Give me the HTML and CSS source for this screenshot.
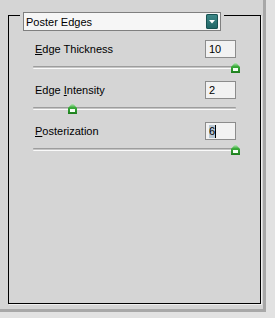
FILE: index.html
```html
<!DOCTYPE html>
<html lang="en">
<head>
    <meta charset="UTF-8">
    <title>Poster Edges</title>
    <link rel="stylesheet" href="styles.css">
</head>
<body>
    <div class="panel">
        <div class="group">

            <!-- Filter picker sits on the group box border -->
            <div class="picker-wrap">
                <div class="picker">
                    <span class="picker-text">Poster Edges</span>
                    <span class="picker-btn">
                        <svg width="6" height="4" viewBox="0 0 6 4"><polygon points="0,0 6,0 3,3.5" fill="#fff"/></svg>
                    </span>
                </div>
            </div>

            <div class="setting">
                <div class="row">
                    <span class="label"><u>E</u>dge Thickness</span>
                    <span class="field">10</span>
                </div>
                <div class="slider">
                    <div class="track"></div>
                    <span class="thumb" style="left: 100%"></span>
                </div>
            </div>

            <div class="setting">
                <div class="row">
                    <span class="label">Edge <u>I</u>ntensity</span>
                    <span class="field">2</span>
                </div>
                <div class="slider">
                    <div class="track"></div>
                    <span class="thumb" style="left: 19.7%"></span>
                </div>
            </div>

            <div class="setting">
                <div class="row">
                    <span class="label"><u>P</u>osterization</span>
                    <span class="field"><span class="selected">6</span><span class="caret"></span></span>
                </div>
                <div class="slider">
                    <div class="track"></div>
                    <span class="thumb" style="left: 100%"></span>
                </div>
            </div>

        </div>
    </div>
</body>
</html>
```

FILE: styles.css
```css
/* General */
body {
    margin: 0;
    background: #e2e2e2;
    font-family: "Liberation Sans", Arial, sans-serif;
    font-size: 10.6px;
    color: #000;
}

.panel {
    width: 266px;
    height: 312px;
    background: #d5d5d5;
    border-right: 3px solid #a8a8a8;
    border-bottom: 3px solid #a8a8a8;
    padding-top: 15px;
    padding-left: 8px;
    box-sizing: border-box;
}

/* Group box */
.group {
    width: 253px;
    height: 289px;
    border: 1px solid #000;
    box-shadow: 1px 1px 0 #f0f0f0;
    box-sizing: border-box;
}

.picker-wrap {
    width: 204px;
    margin-top: -4px;
    margin-left: 11px;
    padding: 0 3px;
    background: #d5d5d5;
    box-sizing: border-box;
}

.picker {
    height: 19px;
    display: flex;
    align-items: center;
    justify-content: space-between;
    border: 1px solid #7f7f7f;
    background: #f6f6f6;
    box-sizing: border-box;
    padding: 0 2px 0 2px;
}

.picker-text {
    font-size: 11px;
}

.picker-btn {
    width: 12px;
    height: 15px;
    display: flex;
    align-items: center;
    justify-content: center;
    border-radius: 2px;
    background: linear-gradient(#3f8a8a, #1f6464);
    box-shadow: inset 0 0 0 1px #175252;
}

/* Settings */
.setting {
    margin-left: 24px;
    width: 203px;
}

.picker-wrap + .setting {
    margin-top: 9px;
}

.row {
    display: flex;
    justify-content: space-between;
    align-items: baseline;
    height: 18px;
}

.label {
    padding-left: 2px;
    font-size: 11px;
}

.field {
    width: 31px;
    height: 18px;
    line-height: 16px;
    border: 1px solid #8c8c8c;
    background: #f2f2f2;
    box-sizing: border-box;
    padding-left: 3px;
    font-size: 11px;
    display: flex;
    align-items: center;
}

.selected {
    background: #b9c8d4;
    line-height: 13px;
}

.caret {
    width: 1px;
    height: 13px;
    background: #000;
}

/* Sliders */
.slider {
    position: relative;
    height: 11px;
    margin-top: 4px;
    margin-bottom: 8px;
}

.track {
    position: relative;
    top: 4px;
    height: 1px;
    border-top: 1px solid #9d9d9d;
    border-bottom: 1px solid #fafafa;
    background: #c4c4c4;
    border-radius: 1px;
}

.thumb {
    position: absolute;
    top: 0;
    width: 9px;
    height: 11px;
    margin-left: -5px;
    background: linear-gradient(#d8f5d8, #3cae3c 40%, #1c7d1c);
    clip-path: polygon(50% 0, 100% 45%, 100% 100%, 0 100%, 0 45%);
}

.thumb::after {
    content: "";
    position: absolute;
    left: 2px;
    top: 6px;
    width: 5px;
    height: 3px;
    background: #f4fff4;
}
```
